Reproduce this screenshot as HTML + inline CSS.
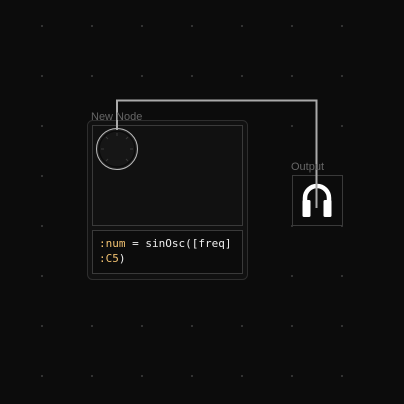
<!DOCTYPE html><html><head><style>
body{margin:0;width:404px;height:404px;background:#0c0c0c;position:relative;overflow:hidden;font-family:"Liberation Sans",sans-serif}
.a{position:absolute;box-sizing:border-box}
</style></head><body>
<svg class="a" style="left:0;top:0" width="404" height="404">
<g fill="#333">
<rect x="41" y="25" width="2" height="2"/><rect x="91" y="25" width="2" height="2"/><rect x="141" y="25" width="2" height="2"/><rect x="191" y="25" width="2" height="2"/><rect x="241" y="25" width="2" height="2"/><rect x="291" y="25" width="2" height="2"/><rect x="341" y="25" width="2" height="2"/>
<rect x="41" y="75" width="2" height="2"/><rect x="91" y="75" width="2" height="2"/><rect x="141" y="75" width="2" height="2"/><rect x="191" y="75" width="2" height="2"/><rect x="241" y="75" width="2" height="2"/><rect x="291" y="75" width="2" height="2"/><rect x="341" y="75" width="2" height="2"/>
<rect x="41" y="125" width="2" height="2"/><rect x="291" y="125" width="2" height="2"/><rect x="341" y="125" width="2" height="2"/>
<rect x="41" y="175" width="2" height="2"/><rect x="341" y="175" width="2" height="2"/>
<rect x="41" y="225" width="2" height="2"/><rect x="341" y="225" width="2" height="2"/><rect x="291" y="225" width="2" height="2"/>
<rect x="41" y="275" width="2" height="2"/><rect x="291" y="275" width="2" height="2"/><rect x="341" y="275" width="2" height="2"/>
<rect x="41" y="325" width="2" height="2"/><rect x="91" y="325" width="2" height="2"/><rect x="141" y="325" width="2" height="2"/><rect x="191" y="325" width="2" height="2"/><rect x="241" y="325" width="2" height="2"/><rect x="291" y="325" width="2" height="2"/><rect x="341" y="325" width="2" height="2"/>
<rect x="41" y="375" width="2" height="2"/><rect x="91" y="375" width="2" height="2"/><rect x="141" y="375" width="2" height="2"/><rect x="191" y="375" width="2" height="2"/><rect x="241" y="375" width="2" height="2"/><rect x="291" y="375" width="2" height="2"/><rect x="341" y="375" width="2" height="2"/>
</g>
<rect x="87.5" y="120.5" width="160" height="159" rx="5" fill="#111" stroke="#2e2e2e"/>
<rect x="92.5" y="125.5" width="150" height="100" fill="#111" stroke="#3a3a3a"/>
<rect x="92.5" y="230.5" width="150" height="43" fill="#0c0c0c" stroke="#3a3a3a"/>
<rect x="292.5" y="175.5" width="50" height="50" fill="#0c0c0c" stroke="#3a3a3a"/>
<circle cx="117" cy="149" r="20.5" fill="#222" stroke="#bbb"/>
<circle cx="117" cy="149" r="18" fill="#161616" stroke="#0a0a0a" stroke-width="1.5"/>
<g stroke="#3a3a3a" stroke-width="1"><path d="M117 133v3M106 137l2 2M128 137l-2 2M101 149h3M133 149h-3M106 161l2-2M128 161l-2-2"/></g>
<path d="M305 212v-14a12 12 0 0 1 24 0v14" fill="none" stroke="#fff" stroke-width="4.5"/>
<rect x="302.5" y="200" width="8" height="17" rx="1.5" fill="#fff"/>
<rect x="323.5" y="200" width="8" height="17" rx="1.5" fill="#fff"/>
<path d="M117 130V100.5H316.5V208" fill="none" stroke="#aaa" stroke-width="2"/>
</svg>
<div class="a" style="left:91px;top:111px;font-size:11px;color:#666">New Node</div>
<div class="a" style="left:291px;top:161px;font-size:11px;color:#666">Output</div>
<div class="a" style="left:99px;top:236px;font:11px/15px 'DejaVu Sans Mono',monospace;color:#eee"><span style="color:#f0c070">:num</span> = sinOsc([freq]<br><span style="color:#f0c070">:C5</span>)</div>
</body></html>
